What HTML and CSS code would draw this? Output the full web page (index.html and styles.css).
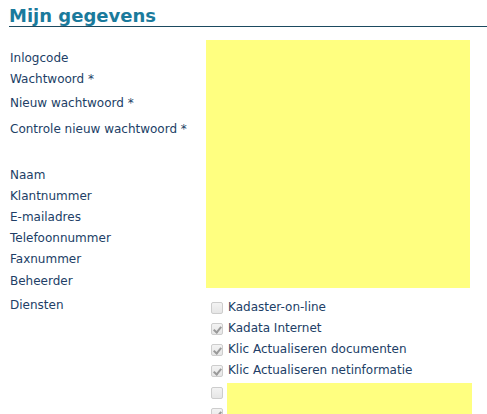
FILE: index.html
```html
<!DOCTYPE html>
<html lang="nl">
<head>
<meta charset="utf-8">
<title>Mijn gegevens</title>
<link rel="stylesheet" href="styles.css">
</head>
<body>
<div class="page">
  <h1 class="title">Mijn gegevens</h1>
  <div class="form">
    <div class="label first">Inlogcode</div>
    <div class="label h24">Wachtwoord *</div>
    <div class="label h26">Nieuw wachtwoord *</div>
    <div class="label h46">Controle nieuw wachtwoord *</div>
    <div class="label">Naam</div>
    <div class="label">Klantnummer</div>
    <div class="label">E-mailadres</div>
    <div class="label">Telefoonnummer</div>
    <div class="label h22">Faxnummer</div>
    <div class="label h24">Beheerder</div>
    <div class="values"></div>
    <div class="label">Diensten</div>
    <div class="services">
      <div class="service"><span class="cb"></span><span class="svc-name">Kadaster-on-line</span></div>
      <div class="service"><span class="cb checked"></span><span class="svc-name">Kadata Internet</span></div>
      <div class="service"><span class="cb checked"></span><span class="svc-name">Klic Actualiseren documenten</span></div>
      <div class="service"><span class="cb checked"></span><span class="svc-name">Klic Actualiseren netinformatie</span></div>
      <div class="more">
        <div class="more-boxes">
          <span class="cb"></span>
          <span class="cb checked"></span>
        </div>
        <div class="more-names"></div>
      </div>
    </div>
  </div>
</div>
</body>
</html>
```
FILE: styles.css
```css
html, body {
  margin: 0;
  padding: 0;
  overflow: hidden;
  background: #ffffff;
}

.page {
  width: 487px;
  height: 414px;
  overflow: hidden;
  font-family: "DejaVu Sans", Verdana, sans-serif;
  font-size: 12px;
  color: #213e66;
}

.title {
  margin: 0 0 0 9px;
  padding-top: 5px;
  font-size: 18px;
  line-height: 21px;
  font-weight: bold;
  color: #1a7a9c;
  border-bottom: 1px solid #1b4a60;
}

.form {
  margin-top: 13px;
  padding-left: 10px;
  display: grid;
  grid-template-columns: 196px 1fr;
  align-items: start;
}

.label {
  grid-column: 1;
  height: 21px;
  line-height: 21px;
  white-space: nowrap;
}

.label.first { height: 29px; padding-top: 8px; box-sizing: border-box; }
.label.h22 { height: 22px; }
.label.h24 { height: 24px; }
.label.h26 { height: 26px; }
.label.h46 { height: 46px; }

.values {
  grid-column: 2;
  grid-row: 1 / span 10;
  width: 264px;
  height: 248px;
  background: #ffff80;
}

.services {
  grid-column: 2;
  padding-top: 2px;
}

.service {
  display: flex;
  align-items: center;
  height: 21px;
  line-height: 21px;
  white-space: nowrap;
}

.cb {
  box-sizing: border-box;
  width: 12px;
  height: 12px;
  margin-left: 5px;
  margin-right: 5px;
  border: 1px solid #cdcdcd;
  border-radius: 2px;
  background: linear-gradient(#f3f3f3, #e6e6e6);
  position: relative;
  flex: none;
}

.cb.checked::after {
  content: "";
  position: absolute;
  left: 3px;
  top: 1px;
  width: 3px;
  height: 6px;
  border-right: 2px solid #9a9a9a;
  border-bottom: 2px solid #9a9a9a;
  transform: rotate(40deg);
}

.svc-name {
  display: block;
}

.more {
  margin-top: 2px;
  display: flex;
}

.more-boxes {
  display: flex;
  flex-direction: column;
  gap: 9px;
  padding-top: 4px;
  width: 21px;
}

.more-names {
  width: 245px;
  height: 40px;
  background: #ffff80;
}
```
